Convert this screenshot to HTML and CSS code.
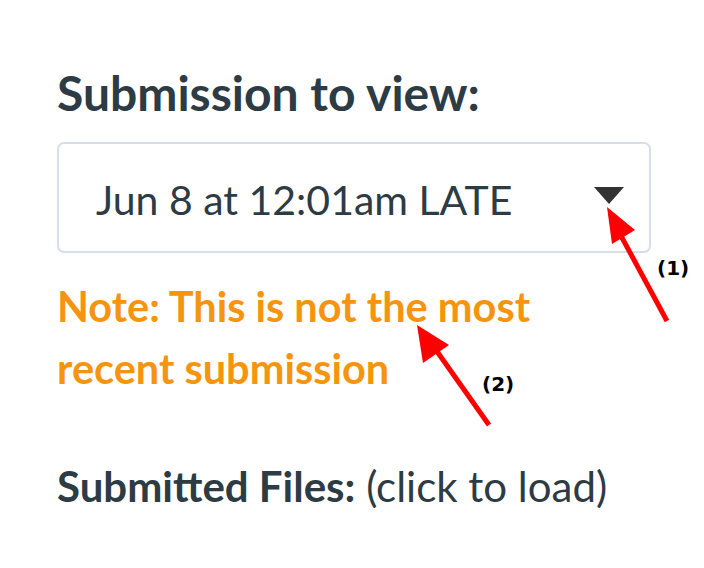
FILE: index.html
```html
<!DOCTYPE html>
<html>
<head>
<meta charset="utf-8">
<link rel="stylesheet" href="styles.css">
</head>
<body>
<div class="page">
  <h2 class="title">Submission to view:</h2>
  <div class="select">
    <span class="select-text">Jun 8 at 12:01am LATE</span>
    <span class="caret"></span>
  </div>
  <p class="note">Note: This is not the most recent submission</p>
  <p class="files"><strong>Submitted Files:</strong> (click to load)</p>
</div>
<svg class="annot" width="704" height="568" viewBox="0 0 704 568">
  <line x1="667" y1="321" x2="620" y2="234" stroke="#ff0000" stroke-width="5"/>
  <polygon points="607,207 635,230 612,244" fill="#ff0000"/>
  <line x1="489" y1="425" x2="436" y2="350" stroke="#ff0000" stroke-width="5"/>
  <polygon points="417,325 449,345 423,363" fill="#ff0000"/>
  <text x="657" y="275" class="lbl">(1)</text>
  <text x="482" y="391" class="lbl">(2)</text>
</svg>
</body>
</html>
```
FILE: styles.css
```css
html, body {
  margin: 0;
  padding: 0;
  background: #ffffff;
}
.page {
  padding: 63px 0 0 57px;
  font-family: Lato, "Open Sans", sans-serif;
  color: #2d3b45;
}
.title {
  margin: 0;
  font-size: 48px;
  font-weight: 700;
  line-height: 60px;
}
.select {
  margin-top: 19px;
  border: 2px solid #d7dee5;
  border-radius: 7px;
  display: flex;
  align-items: center;
  justify-content: space-between;
  padding: 0 25px 0 37px;
  box-sizing: border-box;
  height: 111px;
  width: 594px;
}
.select-text {
  font-size: 41px;
  line-height: 48px;
  padding-top: 5px;
}
.caret {
  width: 0;
  height: 0;
  border-left: 15px solid transparent;
  border-right: 15px solid transparent;
  border-top: 17px solid #333333;
  margin-top: -4px;
}
.note {
  margin: 22px 0 0 0;
  width: 520px;
  font-size: 41.5px;
  font-weight: 700;
  line-height: 62px;
  color: #f7940f;
}
.files {
  margin: 62px 0 0 0;
  font-size: 42px;
  line-height: 50px;
}
.annot {
  position: absolute;
  left: 0;
  top: 0;
}
.lbl {
  font-family: "DejaVu Sans", sans-serif;
  font-weight: 700;
  font-size: 20px;
  fill: #000000;
}
```
